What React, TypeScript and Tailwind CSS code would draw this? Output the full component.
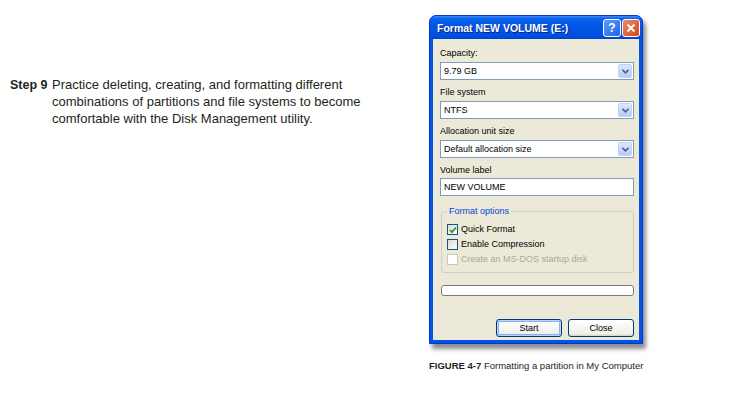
const dlgFont = { fontFamily: '"Liberation Sans", Arial, sans-serif' };

const Chevron = () => (
  <svg width="7" height="5" viewBox="0 0 7 5">
    <path d="M0.5 0.8 L3.5 3.8 L6.5 0.8" fill="none" stroke="#4D6185" strokeWidth="1.6" />
  </svg>
);

const Combo = ({ value }: { value: string }) => (
  <div className="flex items-center h-[18px] bg-white border border-[#7F9DB9] pl-[3px] pr-[1px]">
    <span className="flex-1 text-[9px] leading-[11px] text-black">{value}</span>
    <div className="flex items-center justify-center w-[14px] h-[14px] rounded-[2px] border border-[#C3D3FD] bg-[linear-gradient(to_bottom,#DCE6FE,#B7CBF7)]">
      <Chevron />
    </div>
  </div>
);

const Label = ({ children, mt }: { children: string; mt: string }) => (
  <div className={`${mt} h-[11px] text-[9px] leading-[11px] text-black`}>{children}</div>
);

const CheckRow = ({
  label,
  checked,
  disabled,
}: {
  label: string;
  checked?: boolean;
  disabled?: boolean;
}) => (
  <div className="flex items-center h-[15px] gap-[3px]">
    <div
      className={`flex items-center justify-center w-[11px] h-[11px] border ${
        disabled
          ? 'border-[#CAC8BB] bg-white'
          : 'border-[#1C5180] bg-[linear-gradient(135deg,#DCDBD5,#FFFFFF)]'
      }`}
    >
      {checked && (
        <svg width="8" height="8" viewBox="0 0 8 8">
          <path d="M1 4 L3 6.2 L7 1.5" fill="none" stroke="#21A121" strokeWidth="1.8" />
        </svg>
      )}
    </div>
    <span className={`text-[9px] leading-[11px] ${disabled ? 'text-[#ACA899]' : 'text-black'}`}>
      {label}
    </span>
  </div>
);

const XpButton = ({ children, isDefault }: { children: string; isDefault?: boolean }) => (
  <button
    className={`w-[66px] h-[18px] rounded-[3px] border border-[#003C74] bg-[linear-gradient(to_bottom,#FFFFFF,#F0F0EA_85%,#D6D0C5)] text-[9px] leading-[11px] text-black ${
      isDefault ? 'shadow-[inset_0_0_0_1px_#B9D1FA,inset_0_0_0_2px_#8FB0EE]' : ''
    }`}
  >
    {children}
  </button>
);

const FormatDialog = () => (
  <div
    style={dlgFont}
    className="w-[214px] rounded-t-[7px] border border-[#0831D9] bg-[#0055E5] shadow-[3px_5px_4px_rgba(0,0,0,0.45)]"
  >
    {/* Title bar */}
    <div className="flex items-center h-[23px] pl-[7px] pr-[2px] rounded-t-[6px] bg-[linear-gradient(to_bottom,#3C8CFF_0%,#0A61EA_12%,#0056E6_45%,#0051E0_85%,#0043CC_100%)]">
      <span className="flex-1 pt-[2px] text-[10.5px] font-bold text-white [text-shadow:1px_1px_0_#0A1E8C]">
        Format NEW VOLUME (E:)
      </span>
      <div className="flex gap-[1px]">
        <div className="flex items-center justify-center w-[18px] h-[18px] rounded-[3px] border border-white bg-[linear-gradient(135deg,#5C9BFF,#2363E4)] text-white text-[12px] font-bold leading-none">
          ?
        </div>
        <div className="flex items-center justify-center w-[18px] h-[18px] rounded-[3px] border border-white bg-[linear-gradient(135deg,#EE8A6A,#D2461C)]">
          <svg width="10" height="10" viewBox="0 0 10 10">
            <path d="M1.5 1.5 L8.5 8.5 M8.5 1.5 L1.5 8.5" stroke="white" strokeWidth="2" />
          </svg>
        </div>
      </div>
    </div>

    {/* Body */}
    <div className="mx-[3px] mb-[3px] bg-[#ECE9D8] pl-[7px] pr-[5px] pt-[9px] pb-[3px]">
      <Label mt="mt-0">Capacity:</Label>
      <div className="mt-[3px]">
        <Combo value="9.79 GB" />
      </div>
      <Label mt="mt-[7px]">File system</Label>
      <div className="mt-[3px]">
        <Combo value="NTFS" />
      </div>
      <Label mt="mt-[7px]">Allocation unit size</Label>
      <div className="mt-[3px]">
        <Combo value="Default allocation size" />
      </div>
      <Label mt="mt-[7px]">Volume label</Label>
      <div className="mt-[2px] flex items-center h-[18px] bg-white border border-[#7F9DB9] pl-[3px] text-[9px] leading-[11px] text-black">
        NEW VOLUME
      </div>

      <fieldset className="mt-[10px] ml-[1px] border border-[#D0D0BF] rounded-[3px] px-[5px] pb-[5px]">
        <legend className="px-[2px] text-[9px] leading-[11px] text-[#0046D5]">Format options</legend>
        <div className="mt-[5px]">
          <CheckRow label="Quick Format" checked />
          <CheckRow label="Enable Compression" />
          <CheckRow label="Create an MS-DOS startup disk" disabled />
        </div>
      </fieldset>

      <div className="mt-[12px] ml-[1px] h-[11px] rounded-[3px] border border-[#7A7A7A] bg-white" />

      <div className="mt-[23px] flex justify-end gap-[6px]">
        <XpButton isDefault>Start</XpButton>
        <XpButton>Close</XpButton>
      </div>
    </div>
  </div>
);

export default function App() {
  return (
    <div className="flex w-[746px] h-[409px] bg-white overflow-hidden">
      <div
        className="w-[429px] pl-[10px] pt-[76px] flex items-baseline self-start leading-[17px] text-[#231F20]"
        style={{ fontFamily: '"Liberation Sans", Arial, sans-serif' }}
      >
        <div className="w-[42px] shrink-0 font-bold text-[12.5px]">Step 9</div>
        <p className="text-[13px]">
          Practice deleting, creating, and formatting different
          <br />
          combinations of partitions and file systems to become
          <br />
          comfortable with the Disk Management utility.
        </p>
      </div>

      <div className="flex flex-col pt-[15px]">
        <FormatDialog />
        <div
          className="mt-[16px] text-[9.5px] leading-[12px] text-[#231F20]"
          style={{ fontFamily: '"Liberation Sans", Arial, sans-serif' }}
        >
          <span className="font-bold">FIGURE 4-7</span> Formatting a partition in My Computer
        </div>
      </div>
    </div>
  );
}
